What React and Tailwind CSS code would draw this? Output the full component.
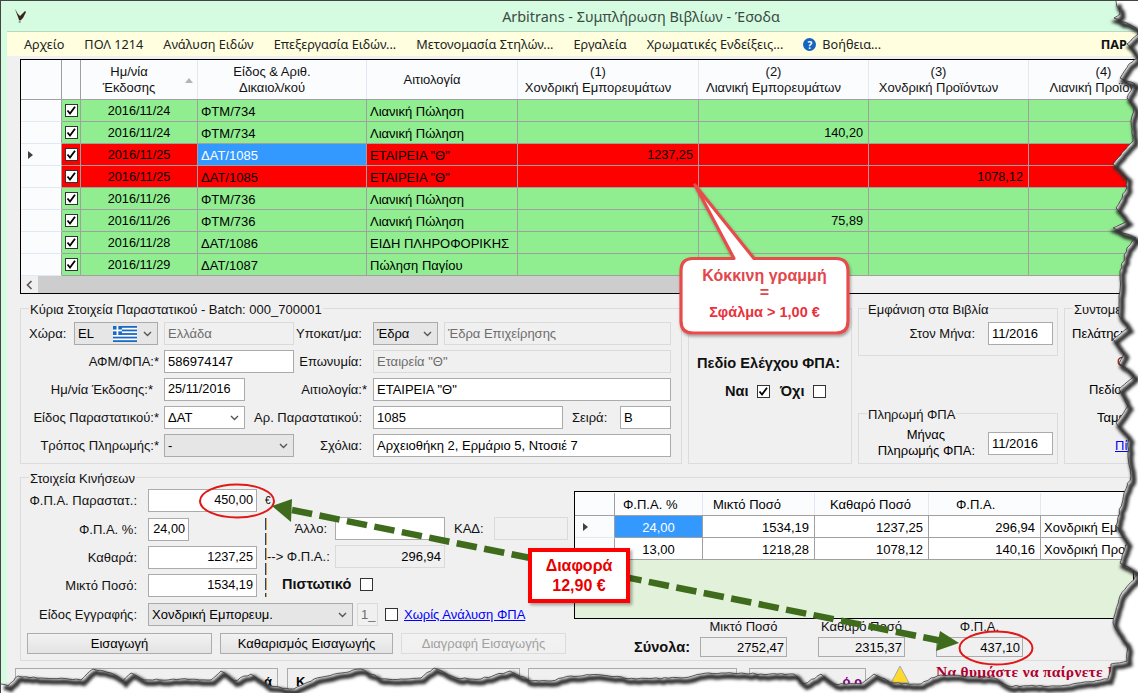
import React from "react";

const FONT = "font-['Liberation_Sans',Arial,sans-serif]";
const UI = "font-['Noto_Sans','Liberation_Sans',sans-serif]";
const GRID = "grid grid-cols-[41px_19px_117px_169px_151px_181px_170px_160px_170px]";

/* ---------- torn paper edge ---------- */
const edgePts = [
  [1115,0],[1119,13],[1113,17],[1135,27],[1137,33],[1126,43],[1137,57],[1128,63],[1119,77],[1134,83],[1126,97],[1133,107],[1130,120],[1132,140],[1112,163],[1126,177],[1126,187],[1115,207],[1126,220],[1112,227],[1126,233],[1135,237],[1126,247],[1119,270],[1119,290],
  [1118,295],[1118,315],[1127,327],[1112,338],[1123,353],[1118,362],[1133,375],[1118,388],[1127,405],[1115,422],[1128,438],[1127,452],[1130,475],[1123,492],[1115,525],[1126,542],[1119,562],[1137,572],[1119,595],[1112,622],[1126,645],[1126,660],[1110,663],[1107,678],
  [1060,685],[1007,685],[993,677],[960,675],[940,674],[930,677],[920,683],[890,682],[887,680],[873,673],[860,683],[833,683],[820,673],[803,683],[797,678],[793,673],[760,673],[720,672],[708,672],[680,677],[635,678],[600,674],[570,675],[550,680],[530,680],[509,670],[480,678],[455,677],[433,667],[420,677],[400,678],[380,678],[360,668],[313,678],[293,688],[267,685],[250,673],[233,680],[220,670],[210,679],[180,678],[143,679],[130,672],[122,680],[110,672],[92,668],[80,679],[40,677],[17,675],[7,685],[0,683],
];
function buildEdge() {
  let s = 12345;
  const rnd = () => { s = (s * 16807) % 2147483647; return s / 2147483647 - 0.5; };
  let d = `M${edgePts[0][0]},${edgePts[0][1]}`;
  for (let i = 1; i < edgePts.length; i++) {
    const [a, b] = edgePts[i - 1];
    const [c, e] = edgePts[i];
    const n = Math.max(1, Math.round(Math.hypot(c - a, e - b) / 4));
    for (let k = 1; k <= n; k++) {
      const t = k / n;
      const j = k === n ? 0 : 1.6;
      d += `L${(a + (c - a) * t + rnd() * j).toFixed(1)},${(b + (e - b) * t + rnd() * j).toFixed(1)}`;
    }
  }
  return d;
}
const EDGE = buildEdge();

function TornEdge() {
  return (
    <svg className="absolute inset-0 pointer-events-none" width="1138" height="693" viewBox="0 0 1138 693">
      <defs>
        <filter id="tb" x="-5%" y="-5%" width="110%" height="110%"><feGaussianBlur stdDeviation="1.4" /></filter>
      </defs>
      <path d={`M-5,-5H1143V698H-5Z ${EDGE} L0,0 Z`} fill="#ffffff" fillRule="evenodd" />
      <path d={EDGE} fill="none" stroke="#333333" strokeWidth="5" transform="translate(3,3.5)" filter="url(#tb)" />
      <path d={EDGE} fill="none" stroke="#333333" strokeWidth="0.8" />
    </svg>
  );
}

/* ---------- small drawings ---------- */
function Eagle() {
  return (
    <svg width="14" height="17" viewBox="0 0 14 17" className="absolute left-[12px] top-[7px]">
      <path d="M2 1 L5 6 L7 8 L12 3 L13 4 L10 10 L8 12 L6 12 L5 9 Z" fill="#3b2418" />
      <path d="M6 12 L8 12 L7.5 15 L5.5 15 Z" fill="#8aa0b4" />
    </svg>
  );
}
function Tick({ size = 13 }) {
  return (
    <svg width={size} height={size} viewBox="0 0 13 13" className="block">
      <path d="M2.5 6.5 L5 9.5 L10 2.8" fill="none" stroke="#000" strokeWidth="1.8" />
    </svg>
  );
}
function Box({ checked, className = "" }) {
  return (
    <span className={`block shrink-0 w-[13px] h-[13px] border border-[#333] bg-white ${className}`}>
      {checked ? <span className="block -m-px"><Tick /></span> : null}
    </span>
  );
}
function Chevron() {
  return (
    <svg width="9" height="6" viewBox="0 0 9 6" className="shrink-0">
      <path d="M1 1 L4.5 4.5 L8 1" fill="none" stroke="#555" strokeWidth="1.4" />
    </svg>
  );
}
function Flag() {
  return (
    <svg width="24" height="16" viewBox="0 0 27 18" className="shrink-0">
      <rect width="27" height="18" fill="#1769c4" />
      {[2, 6, 10, 14].map((y) => <rect key={y} x="0" y={y} width="27" height="2" fill="#fff" />)}
      <rect width="10" height="10" fill="#1769c4" />
      <rect x="4" width="2" height="10" fill="#fff" />
      <rect y="4" width="10" height="2" fill="#fff" />
    </svg>
  );
}

/* ---------- form bits ---------- */
const Field = ({ className = "", children }) => (
  <div className={`flex items-center shrink-0 h-[23px] px-[3px] border border-[#ababab] bg-white text-black whitespace-nowrap overflow-hidden ${className}`}>{children}</div>
);
const Off = ({ className = "", children }) => (
  <div className={`flex items-center shrink-0 h-[23px] px-[3px] border border-[#dadada] bg-[#f0f0f0] text-[#6d6d6d] whitespace-nowrap overflow-hidden ${className}`}>{children}</div>
);
const Select = ({ className = "", children }) => (
  <div className={`flex items-center justify-between shrink-0 h-[23px] pl-[3px] pr-[5px] border border-[#ababab] whitespace-nowrap ${className}`}>{children}<Chevron /></div>
);
const Lab = ({ className = "", children }) => (
  <span className={`shrink-0 text-right whitespace-nowrap text-[#111] ${className}`}>{children}</span>
);
const LabL = ({ className = "", children }) => (
  <span className={`shrink-0 whitespace-nowrap text-[#111] ${className}`}>{children}</span>
);
const Group = ({ legend, className = "", children }) => (
  <div className={`relative shrink-0 border border-[#dcdcdc] ${className}`}>
    <span className="absolute left-[8px] -top-[7px] px-[1px] bg-[#f0f0f0] whitespace-nowrap leading-[16px] text-[#111]">{legend}</span>
    {children}
  </div>
);
const Btn = ({ className = "", children }) => (
  <div className={`flex items-center justify-center shrink-0 h-[21px] border border-[#adadad] bg-gradient-to-b from-[#f2f2f2] to-[#e3e3e3] ${className}`}>{children}</div>
);

/* ---------- main table ---------- */
const G = "bg-[#90ee90]";
const rows = [
  { d: "2016/11/24", t: "ΦΤΜ/734", r: "Λιανική Πώληση" },
  { d: "2016/11/24", t: "ΦΤΜ/734", r: "Λιανική Πώληση", c2: "140,20" },
  { d: "2016/11/25", t: "ΔΑΤ/1085", r: 'ΕΤΑΙΡΕΙΑ "Θ"', c1: "1237,25", red: true, sel: true },
  { d: "2016/11/25", t: "ΔΑΤ/1085", r: 'ΕΤΑΙΡΕΙΑ "Θ"', c3: "1078,12", red: true },
  { d: "2016/11/26", t: "ΦΤΜ/736", r: "Λιανική Πώληση" },
  { d: "2016/11/26", t: "ΦΤΜ/736", r: "Λιανική Πώληση", c2: "75,89" },
  { d: "2016/11/28", t: "ΔΑΤ/1086", r: "ΕΙΔΗ ΠΛΗΡΟΦΟΡΙΚΗΣ" },
  { d: "2016/11/29", t: "ΔΑΤ/1087", r: "Πώληση Παγίου" },
];
const HeadCell = ({ children, className = "" }) => (
  <div className={`relative flex flex-col items-center justify-center text-center leading-[16px] border-r border-[#e3e9f2] whitespace-nowrap overflow-hidden text-[#111] ${className}`}>{children}</div>
);
const Cell = ({ className = "", children }) => (
  <div className={`flex items-center pt-[2px] border-r border-b border-[#a0a0a0] whitespace-nowrap overflow-hidden text-black ${className}`}>{children}</div>
);
function MainGrid() {
  return (
    <div className="mt-[3px] w-[1125px] border border-black bg-[#f0f0f0]">
      <div className={`${GRID} h-[40px] bg-[#fbfcfe] border-b border-[#a0a0a0]`}>
        <HeadCell className="border-r-[#a0a0a0]" />
        <HeadCell className="border-r-[#a0a0a0]" />
        <HeadCell className="pr-[20px]">
          <span>Ημ/νία</span><span>Έκδοσης</span>
          <span className="absolute right-[4px] top-[18px] w-0 h-0 border-x-[4.5px] border-x-transparent border-b-[5px] border-b-[#b4b4b4]" />
        </HeadCell>
        <HeadCell className="pr-[20px]"><span>Είδος &amp; Αριθ.</span><span>Δικαιολ/κού</span></HeadCell>
        <HeadCell className="pr-[20px]"><span>Αιτιολογία</span></HeadCell>
        <HeadCell className="pr-[20px]"><span>(1)</span><span>Χονδρική Εμπορευμάτων</span></HeadCell>
        <HeadCell className="pr-[20px]"><span>(2)</span><span>Λιανική Εμπορευμάτων</span></HeadCell>
        <HeadCell className="pr-[20px]"><span>(3)</span><span>Χονδρική Προϊόντων</span></HeadCell>
        <HeadCell className="pr-[20px]"><span>(4)</span><span>Λιανική Προϊόντων</span></HeadCell>
      </div>
      {rows.map((r, i) => {
        const bg = r.red ? "bg-[#ff0000]" : G;
        return (
          <div key={i} className={`${GRID} h-[22px]`}>
            <div className="flex items-center pl-[7px] bg-[#fbfcfe] border-r border-r-[#a0a0a0] border-b border-b-[#e3e9f2]">
              {r.sel ? <span className="w-0 h-0 border-y-[4.5px] border-y-transparent border-l-[5px] border-l-[#404040]" /> : null}
            </div>
            <div className={`flex items-center justify-center border-r border-b border-[#a0a0a0] ${bg}`}><Box checked /></div>
            <Cell className={`${bg} justify-center text-[12.7px]`}>{r.d}</Cell>
            <Cell className={`${r.sel ? "bg-[#3399ff] text-white" : bg} pl-[3px]`}>{r.t}</Cell>
            <Cell className={`${bg} pl-[3px]`}>{r.r}</Cell>
            <Cell className={`${bg} justify-end pr-[5px] text-[12.7px]`}>{r.c1}</Cell>
            <Cell className={`${bg} justify-end pr-[5px] text-[12.7px]`}>{r.c2}</Cell>
            <Cell className={`${bg} justify-end pr-[5px] text-[12.7px]`}>{r.c3}</Cell>
            <Cell className={bg} />
          </div>
        );
      })}
      <div className="flex h-[17px] bg-[#f0f0f0]">
        <div className="flex items-center justify-center w-[17px]">
          <svg width="7" height="10" viewBox="0 0 7 10"><path d="M5.5 1 L1.5 5 L5.5 9" fill="none" stroke="#555" strokeWidth="1.6" /></svg>
        </div>
        <div className="w-[794px] bg-[#cdcdcd]" />
      </div>
    </div>
  );
}

/* ---------- upper form ---------- */
function MainGroup() {
  return (
    <Group legend="Κύρια Στοιχεία Παραστατικού - Batch: 000_700001" className="w-[662px] h-[156px]">
      <div className="flex flex-col gap-[5px] pt-[13px]">
        <div className="flex items-center">
          <LabL className="ml-[8px] w-[45px]">Χώρα:</LabL>
          <Select className="w-[84px] bg-[#e6e6e6]">
            <span className="flex items-center gap-[19px]"><span>EL</span><Flag /></span>
          </Select>
          <Off className="ml-[6px] w-[130px]">Ελλάδα</Off>
          <Lab className="w-[68px]">Υποκατ/μα:</Lab>
          <Select className="ml-[11px] w-[65px] bg-[#e6e6e6]">Έδρα</Select>
          <Off className="ml-[6px] w-[227px]">Έδρα Επιχείρησης</Off>
        </div>
        <div className="flex items-center">
          <Lab className="w-[138px]">ΑΦΜ/ΦΠΑ:*</Lab>
          <Field className="ml-[5px] w-[130px]">586974147</Field>
          <Lab className="w-[68px]">Επωνυμία:</Lab>
          <Off className="ml-[11px] w-[298px]">Εταιρεία "Θ"</Off>
        </div>
        <div className="flex items-center">
          <Lab className="w-[132px]">Ημ/νία Έκδοσης:*</Lab>
          <Field className="ml-[11px] w-[81px] text-[12.7px]">25/11/2016</Field>
          <Lab className="w-[122px]">Αιτιολογία:*</Lab>
          <Field className="ml-[6px] w-[298px]">ΕΤΑΙΡΕΙΑ "Θ"</Field>
        </div>
        <div className="flex items-center">
          <Lab className="w-[138px]">Είδος Παραστατικού:*</Lab>
          <Select className="ml-[5px] w-[81px] bg-white">ΔΑΤ</Select>
          <Lab className="w-[117px]">Αρ. Παραστατικού:</Lab>
          <Field className="ml-[11px] w-[190px]">1085</Field>
          <LabL className="ml-[9px] w-[41px]">Σειρά:</LabL>
          <Field className="ml-[7px] w-[51px]">Β</Field>
        </div>
        <div className="flex items-center">
          <Lab className="w-[138px]">Τρόπος Πληρωμής:*</Lab>
          <Select className="ml-[5px] w-[130px] bg-[#e6e6e6]">-</Select>
          <Lab className="w-[68px]">Σχόλια:</Lab>
          <Field className="ml-[11px] w-[298px]">Αρχειοθήκη 2, Ερμάριο 5, Ντοσιέ 7</Field>
        </div>
      </div>
    </Group>
  );
}
function VatCheckGroup() {
  return (
    <div className="shrink-0 w-[164px] h-[156px] border border-[#dcdcdc] font-bold text-[14.6px] text-[#111]">
      <div className="pt-[47px] pl-[8px] whitespace-nowrap">Πεδίο Ελέγχου ΦΠΑ:</div>
      <div className="flex items-center mt-[13px] pl-[36px]">
        <span className="w-[23px]">Ναι</span><Box checked className="ml-[9px]" />
        <span className="ml-[10px] w-[25px]">Όχι</span><Box className="ml-[8px]" />
      </div>
    </div>
  );
}
function BooksColumn() {
  return (
    <div className="shrink-0 w-[200px] h-[156px] flex flex-col justify-between">
      <Group legend="Εμφάνιση στα Βιβλία" className="h-[48px]">
        <div className="flex items-center pt-[13px]">
          <Lab className="w-[116px]">Στον Μήνα:</Lab>
          <Field className="ml-[13px] w-[65px]">11/2016</Field>
        </div>
      </Group>
      <Group legend="Πληρωμή ΦΠΑ" className="h-[51px]">
        <div className="flex items-center pt-[13px]">
          <div className="w-[116px] text-right leading-[16px] shrink-0 whitespace-nowrap">
            <div className="pr-[30px]">Μήνας</div>
            <div>Πληρωμής ΦΠΑ:</div>
          </div>
          <Field className="ml-[13px] w-[65px]">11/2016</Field>
        </div>
      </Group>
    </div>
  );
}
function ShortcutsGroup() {
  return (
    <Group legend="Συντομεύσεις" className="w-[120px] h-[156px]">
      <div className="flex flex-col gap-[5px] pt-[13px] whitespace-nowrap">
        <div className="h-[23px] flex items-center pl-[7px]">Πελάτης:</div>
        <div className="h-[23px] flex items-center pl-[52px] text-[#7a1020]">Ο</div>
        <div className="h-[23px] flex items-center pl-[24px]">Πεδίο</div>
        <div className="h-[23px] flex items-center pl-[32px]">Ταμείο</div>
        <div className="h-[23px] flex items-center pl-[50px] text-[#0000ff] underline">Πίνακας</div>
      </div>
    </Group>
  );
}

/* ---------- movements ---------- */
const vatRows = [
  { p: "24,00", g: "1534,19", n: "1237,25", v: "296,94", l: "Χονδρική Εμπορευμάτων", sel: true },
  { p: "13,00", g: "1218,28", n: "1078,12", v: "140,16", l: "Χονδρική Προϊόντων" },
];
const VGRID = "grid grid-cols-[40px_88px_112px_114px_112px_140px]";
const VCell = ({ className = "", children }) => (
  <div className={`flex items-center pt-[2px] border-r border-b border-[#a0a0a0] whitespace-nowrap overflow-hidden ${className}`}>{children}</div>
);
function VatGrid() {
  return (
    <div className="w-[560px] h-[128px] border border-black bg-[#e2f1d9] overflow-hidden">
      <div className={`${VGRID} h-[24px] pt-[1px] bg-[#fbfcfe] border-b border-[#a0a0a0]`}>
        <div className="border-r border-[#a0a0a0]" />
        <div className="flex items-center pl-[8px] border-r border-[#e3e9f2]">Φ.Π.Α. %</div>
        <div className="flex items-center pl-[10px] border-r border-[#e3e9f2]">Μικτό Ποσό</div>
        <div className="flex items-center pl-[15px] border-r border-[#e3e9f2]">Καθαρό Ποσό</div>
        <div className="flex items-center pl-[27px] border-r border-[#e3e9f2]">Φ.Π.Α.</div>
        <div />
      </div>
      {vatRows.map((r, i) => (
        <div key={i} className={`${VGRID} h-[22px]`}>
          <div className="flex items-center pl-[8px] bg-[#fbfcfe] border-r border-r-[#a0a0a0] border-b border-b-[#e3e9f2]">
            {r.sel ? <span className="w-0 h-0 border-y-[4.5px] border-y-transparent border-l-[5px] border-l-[#404040]" /> : null}
          </div>
          <VCell className={`justify-center ${r.sel ? "bg-[#3399ff] text-white" : "bg-white"}`}>{r.p}</VCell>
          <VCell className="justify-end pr-[5px] bg-white">{r.g}</VCell>
          <VCell className="justify-end pr-[5px] bg-white">{r.n}</VCell>
          <VCell className="justify-end pr-[5px] bg-white">{r.v}</VCell>
          <VCell className="pl-[3px] bg-white">{r.l}</VCell>
        </div>
      ))}
    </div>
  );
}
const Total = ({ label, value }) => (
  <div className="w-[87px] shrink-0 flex flex-col items-center">
    <span className="leading-[16px] whitespace-nowrap text-[#111]">{label}</span>
    <div className="mt-[2px] w-full h-[20px] flex items-center justify-end pr-[2px] border border-[#ababab]">{value}</div>
  </div>
);
function MovementsGroup() {
  return (
    <Group legend="Στοιχεία Κινήσεων" className="w-[1110px] h-[184px]">
      <div className="flex">
        <div className="w-[553px] shrink-0 pt-[11px]">
          <div className="flex items-center">
            <Lab className="w-[116px]">Φ.Π.Α. Παραστατ.:</Lab>
            <Field className="ml-[11px] w-[109px] justify-end text-[12.7px]">450,00</Field>
            <span className="ml-[8px] text-[10px]">€</span>
          </div>
          <div className="flex mt-[6px]">
            <div className="w-[236px] shrink-0 flex flex-col gap-[5px] text-[12.7px]">
              <div className="flex items-center">
                <Lab className="w-[116px] text-[13px]">Φ.Π.Α. %:</Lab>
                <Field className="ml-[11px] w-[41px] justify-end">24,00</Field>
              </div>
              <div className="flex items-center">
                <Lab className="w-[116px] text-[13px]">Καθαρά:</Lab>
                <Field className="ml-[11px] w-[109px] justify-end">1237,25</Field>
              </div>
              <div className="flex items-center">
                <Lab className="w-[116px] text-[13px]">Μικτό Ποσό:</Lab>
                <Field className="ml-[11px] w-[109px] justify-end">1534,19</Field>
              </div>
            </div>
            <svg width="2" height="79" viewBox="0 0 2 79" className="ml-[8px] shrink-0">
              <line x1="0.5" y1="0" x2="0.5" y2="79" stroke="#28407a" strokeWidth="1" strokeDasharray="12 3" />
              <line x1="1.5" y1="0" x2="1.5" y2="79" stroke="#d9a441" strokeWidth="1" strokeDasharray="12 3" />
            </svg>
            <div className="flex flex-col gap-[5px] -mt-[1px]">
              <div className="flex items-center">
                <Lab className="w-[60px]">Άλλο:</Lab>
                <Field className="ml-[8px] w-[110px]" />
                <LabL className="ml-[9px] w-[40px]">ΚΑΔ:</LabL>
                <Off className="w-[74px]" />
              </div>
              <div className="flex items-center">
                <Lab className="w-[60px]">--&gt; Φ.Π.Α.:</Lab>
                <Off className="ml-[8px] w-[110px] justify-end text-black border-[#ababab]">296,94</Off>
              </div>
              <div className="flex items-center h-[23px]">
                <span className="ml-[15px] font-bold text-[14.5px] text-[#111] whitespace-nowrap">Πιστωτικό</span>
                <Box className="ml-[9px]" />
              </div>
            </div>
          </div>
          <div className="flex items-center mt-[6px]">
            <Lab className="w-[116px]">Είδος Εγγραφής:</Lab>
            <Select className="ml-[11px] w-[205px] bg-[#e6e6e6]">Χονδρική Εμπορευμ.</Select>
            <Off className="ml-[4px] w-[21px]">1_</Off>
            <Box className="ml-[7px]" />
            <span className="ml-[6px] text-[#0000ff] underline whitespace-nowrap">Χωρίς Ανάλυση ΦΠΑ</span>
          </div>
          <div className="flex items-center mt-[7px]">
            <Btn className="ml-[6px] w-[185px]">Εισαγωγή</Btn>
            <Btn className="ml-[8px] w-[173px]">Καθαρισμός Εισαγωγής</Btn>
            <Btn className="ml-[8px] w-[165px] text-[#a0a0a0] border-[#dcdcdc] from-[#f0f0f0] to-[#f0f0f0]">Διαγραφή Εισαγωγής</Btn>
          </div>
        </div>
        <div className="pt-[13px]">
          <VatGrid />
          <div className="flex items-end gap-[31px]">
            <span className="ml-[60px] -mr-[31px] w-[66px] h-[20px] flex items-center font-bold text-[14.6px] text-[#111] shrink-0 whitespace-nowrap">Σύνολα:</span>
            <Total label="Μικτό Ποσό" value="2752,47" />
            <Total label="Καθαρό Ποσό" value="2315,37" />
            <Total label="Φ.Π.Α." value="437,10" />
          </div>
        </div>
      </div>
    </Group>
  );
}
function BottomBar() {
  return (
    <div className="flex items-start mt-[7px] -ml-[5px] h-[30px]">
      <div className="shrink-0 w-[263px] h-[26px] border border-[#ababab] flex items-center justify-end pr-[5px] font-bold">ά</div>
      <div className="shrink-0 ml-[9px] w-[233px] h-[26px] border border-[#ababab] flex items-center pl-[8px] font-bold">Κ</div>
      <div className="shrink-0 ml-[8px] w-[209px] h-[26px] border border-[#ababab]" />
      <div className="shrink-0 ml-[12px] w-[117px] h-[26px] border border-[#ababab] flex items-center justify-end pr-[3px] font-bold text-[#800080]">ό ρ</div>
      <svg width="22" height="20" viewBox="0 0 22 20" className="ml-[23px] shrink-0 -mt-[3px]">
        <path d="M11 1 L20 18 L2 18 Z" fill="#ffd92e" stroke="#a8a8a8" strokeWidth="1" />
      </svg>
      <span className="ml-[25px] -mt-[4px] font-['Liberation_Serif',serif] font-bold text-[15.5px] text-[#b00030] whitespace-nowrap tracking-[0.3px]">Να θυμάστε να παίρνετε Ι</span>
    </div>
  );
}

/* ---------- screenshot annotations ---------- */
function Annotations() {
  return (
    <>
      <svg className="absolute inset-0 pointer-events-none" width="1138" height="693" viewBox="0 0 1138 693">
        <defs>
          <filter id="ds" x="-10%" y="-10%" width="120%" height="125%"><feDropShadow dx="1" dy="2" stdDeviation="1.5" floodColor="#000" floodOpacity="0.35" /></filter>
        </defs>
        <ellipse cx="236" cy="500" rx="37" ry="16.5" fill="none" stroke="#e01818" strokeWidth="2" />
        <ellipse cx="995" cy="647" rx="36.5" ry="16.5" fill="none" stroke="#e01818" strokeWidth="2" />
        <line x1="291" y1="509" x2="941" y2="640" stroke="#3f6b1c" strokeWidth="6.5" strokeDasharray="20.5 7.5" />
        <path d="M271 505 L291 498 L290 521 Z" fill="#3f6b1c" />
        <path d="M958 642 L939 630 L935 650 Z" fill="#3f6b1c" />
        <path
          d="M694 184 L753 257.5 L835 257.5 Q847 257.5 847 270 L847 320 Q847 332 835 332 L692 332 Q680 332 680 320 L680 270 Q680 257.5 692 257.5 L733 257.5 Z"
          fill="#fff"
          stroke="#e84c4c"
          strokeWidth="3.2"
          filter="url(#ds)"
          strokeLinejoin="round"
        />
      </svg>
      <div className="absolute left-[680px] top-[266px] w-[167px] flex flex-col items-center font-bold text-[16px] text-[#e2474c] leading-[17px] whitespace-nowrap">
        <span>Κόκκινη γραμμή</span>
        <span>=</span>
        <span className="mt-[3px] text-[14.5px] text-[#e8323c]">Σφάλμα &gt; 1,00 €</span>
      </div>
      <div className="absolute left-[527px] top-[547px] w-[102px] h-[55px] border-[4px] border-[#ff0000] bg-white shadow-[2px_2px_3px_rgba(0,0,0,0.35)] flex flex-col items-center justify-center font-bold text-[16px] leading-[20px] text-[#e80000]">
        <span>Διαφορά</span>
        <span>12,90 €</span>
      </div>
    </>
  );
}

export default function App() {
  return (
    <div className={`relative w-[1138px] h-[693px] overflow-hidden bg-[#d5fbe1] border-l border-t border-[#444] text-[13px] leading-[15px] text-black ${FONT}`}>
      <Eagle />
      <div className={`h-[30px] flex items-center justify-center pl-[143px] text-[14.4px] text-[#3c4a44] whitespace-nowrap ${UI}`}>
        Arbitrans - Συμπλήρωση Βιβλίων - Έσοδα
      </div>
      <div className="ml-[6px] bg-[#f0f0f0] h-[662px]">
        <div className={`h-[25px] pt-[1px] pl-[17px] pr-[11px] flex items-center gap-[20px] bg-[#ffffe0] border-t border-[#b9d8c4] text-[12.7px] text-[#222] whitespace-nowrap ${UI}`}>
          <span>Αρχείο</span>
          <span>ΠΟΛ 1214</span>
          <span>Ανάλυση Ειδών</span>
          <span>Επεξεργασία Ειδών...</span>
          <span>Μετονομασία Στηλών...</span>
          <span>Εργαλεία</span>
          <span>Χρωματικές Ενδείξεις...</span>
          <span className="flex items-center gap-[6px]">
            <span className="flex items-center justify-center w-[13px] h-[13px] rounded-full bg-[#1565c0] text-white font-bold text-[10px] leading-none">?</span>
            Βοήθεια...
          </span>
          <span className="ml-auto font-bold text-[#111]">ΠΑΡ</span>
        </div>
        <div className="pl-[13px]">
          <MainGrid />
          <div className="flex gap-[6px] mt-[14px]">
            <MainGroup />
            <VatCheckGroup />
            <BooksColumn />
            <ShortcutsGroup />
          </div>
          <div className="mt-[13px]">
            <MovementsGroup />
          </div>
          <BottomBar />
        </div>
      </div>
      <Annotations />
      <TornEdge />
    </div>
  );
}
